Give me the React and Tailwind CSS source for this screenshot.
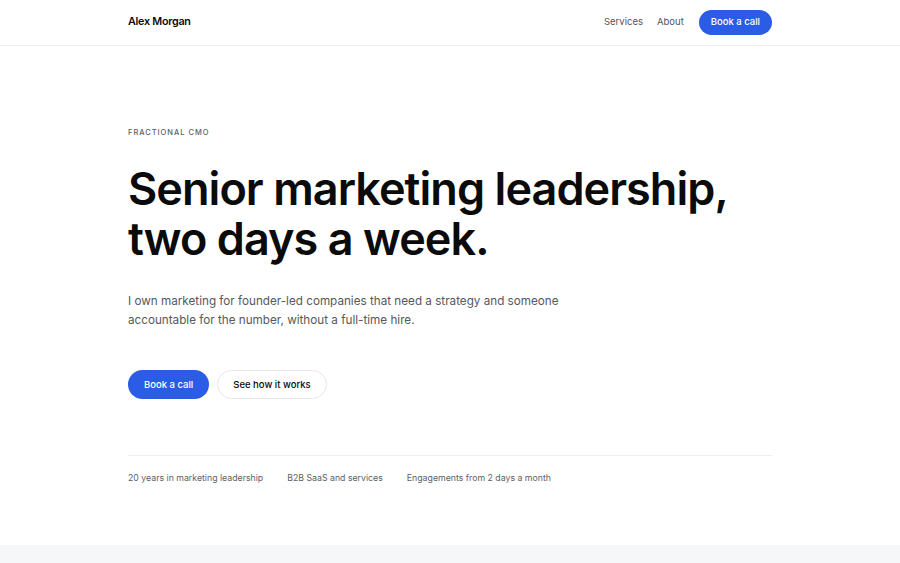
const NAV_LINKS = ['Services', 'About']

const FACTS = [
  '20 years in marketing leadership',
  'B2B SaaS and services',
  'Engagements from 2 days a month',
]

export default function App() {
  return (
    <div className="min-h-screen bg-white text-[#0b0b0c]" style={{ fontFamily: 'Inter, "Noto Sans", sans-serif' }}>
      {/* Header */}
      <header className="border-b border-[#eeeff1]">
        <div className="mx-auto flex h-[45px] max-w-[644px] items-center justify-between">
          <span className="text-[10.75px] font-semibold tracking-tight">Alex Morgan</span>
          <nav className="flex items-center gap-[14px] text-[9.5px] text-[#52555b]">
            {NAV_LINKS.map((l) => (
              <a key={l} href="#">{l}</a>
            ))}
            <a
              href="#"
              className="ml-[1px] flex h-[25px] items-center rounded-full bg-[#2b5ce6] px-[12px] font-medium text-white"
            >
              Book a call
            </a>
          </nav>
        </div>
      </header>

      {/* Hero */}
      <section className="mx-auto max-w-[644px] pt-[81px] pb-[60px]">
        <p className="text-[7.5px] font-medium uppercase tracking-[0.13em] text-[#5c5f66]">Fractional CMO</p>
        <h1 className="mt-[26px] text-[45px] font-semibold leading-[50px] tracking-[-0.021em]">
          Senior marketing leadership,
          <br />
          two days a week.
        </h1>
        <p className="mt-[28px] max-w-[450px] text-[11.7px] leading-[19px] text-[#55585e]">
          I own marketing for founder-led companies that need a strategy and someone accountable for the number,
          without a full-time hire.
        </p>
        <div className="mt-[40px] flex gap-[8px] text-[9.5px] font-medium">
          <a href="#" className="flex h-[29px] items-center rounded-full bg-[#2b5ce6] px-[16px] text-white">
            Book a call
          </a>
          <a
            href="#"
            className="flex h-[29px] items-center rounded-full border border-[#e6e7ea] bg-white px-[15px] text-[#0b0b0c]"
          >
            See how it works
          </a>
        </div>
        <div className="mt-[56px] flex gap-[24px] border-t border-[#eeeff1] pt-[16px] text-[8.75px] text-[#5c5f66]">
          {FACTS.map((f) => (
            <span key={f}>{f}</span>
          ))}
        </div>
      </section>

      <section className="h-[200px] bg-[#f6f7f9]" />
    </div>
  )
}
